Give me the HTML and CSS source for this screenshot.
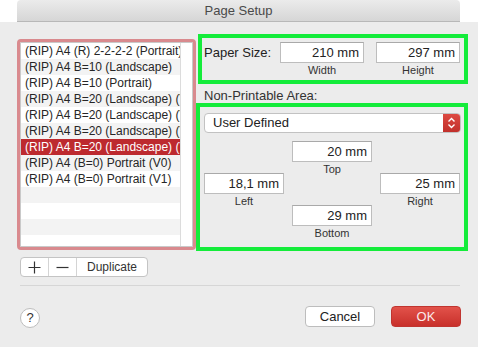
FILE: index.html
```html
<!DOCTYPE html>
<html lang="en">
<head>
    <meta charset="UTF-8">
    <title>Page Setup</title>
    <link rel="stylesheet" href="styles.css">
</head>
<body>

<div class="titlebar">Page Setup</div>

<div class="window">
    <div class="main">
        <div class="left">
            <div class="list">
                <div class="rows">
                    <div class="row">(RIP) A4 (R) 2-2-2-2 (Portrait)</div>
                    <div class="row">(RIP) A4 B=10 (Landscape)</div>
                    <div class="row">(RIP) A4 B=10 (Portrait)</div>
                    <div class="row">(RIP) A4 B=20 (Landscape) (V0)</div>
                    <div class="row">(RIP) A4 B=20 (Landscape) (V1)</div>
                    <div class="row">(RIP) A4 B=20 (Landscape) (V2)</div>
                    <div class="row selected">(RIP) A4 B=20 (Landscape) (V3)</div>
                    <div class="row">(RIP) A4 (B=0) Portrait (V0)</div>
                    <div class="row">(RIP) A4 (B=0) Portrait (V1)</div>
                    <div class="row"></div>
                    <div class="row"></div>
                    <div class="row"></div>
                    <div class="row"></div>
                </div>
                <div class="scroller"></div>
            </div>
            <div class="segmented">
                <span class="seg seg-icon">
                    <svg width="13" height="13" viewBox="0 0 13 13">
                        <path d="M6.5 0.5 V12.5 M0.5 6.5 H12.5" stroke="#333" stroke-width="1.2" fill="none"/>
                    </svg>
                </span>
                <span class="seg seg-icon">
                    <svg width="13" height="13" viewBox="0 0 13 13">
                        <path d="M0.5 6.5 H12.5" stroke="#333" stroke-width="1.2" fill="none"/>
                    </svg>
                </span>
                <span class="seg seg-text">Duplicate</span>
            </div>
        </div>

        <div class="right">
            <div class="box paper">
                <span class="paper-label">Paper Size:</span>
                <div class="field">
                    <input class="num" type="text" value="210 mm">
                    <span class="caption">Width</span>
                </div>
                <div class="field second">
                    <input class="num" type="text" value="297 mm">
                    <span class="caption">Height</span>
                </div>
            </div>

            <div class="section-label">Non-Printable Area:</div>

            <div class="box margins">
                <div class="popup">
                    <span>User Defined</span>
                    <span class="stepper">
                        <svg width="9" height="12" viewBox="0 0 9 12">
                            <path d="M1.5 4.5 L4.5 1.5 L7.5 4.5 M1.5 7.5 L4.5 10.5 L7.5 7.5" fill="none" stroke="#fff" stroke-width="1.4"/>
                        </svg>
                    </span>
                </div>
                <div class="margin-grid">
                    <div class="field side">
                        <input class="num" type="text" value="18,1 mm">
                        <span class="caption">Left</span>
                    </div>
                    <div class="field center">
                        <input class="num" type="text" value="20 mm">
                        <span class="caption">Top</span>
                        <input class="num bottom" type="text" value="29 mm">
                        <span class="caption">Bottom</span>
                    </div>
                    <div class="field side">
                        <input class="num" type="text" value="25 mm">
                        <span class="caption">Right</span>
                    </div>
                </div>
            </div>
        </div>
    </div>

    <div class="separator"></div>

    <div class="footer">
        <span class="help">?</span>
        <button class="btn cancel">Cancel</button>
        <button class="btn ok">OK</button>
    </div>
</div>

</body>
</html>
```

FILE: styles.css
```css
body {
    margin: 0;
    background-color: #fff;
    font-family: "Liberation Sans", Arial, sans-serif;
    color: #222;
    font-size: 13px;
}
.titlebar {
    margin: 0 18px 0 17px;
    height: 21px;
    line-height: 22px;
    text-align: center;
    color: #4a4a4a;
    font-size: 13px;
    background: linear-gradient(#ebebeb, #d6d6d6);
    border-bottom: 1px solid #b8b8b8;
    border-radius: 4px 4px 0 0;
}
.window {
    background-color: #ececec;
    height: 325px;
    overflow: hidden;
}
.main {
    display: flex;
    align-items: flex-start;
    height: 255px;
}
.left {
    margin-left: 17px;
    margin-top: 17px;
    width: 179px;
}
.list {
    display: flex;
    height: 203px;
    border: 3px solid #d98a8e;
    border-radius: 4px;
    background-color: #fff;
    box-shadow: inset 0 0 0 1px #c9c9c9;
    padding: 1px;
    overflow: hidden;
}
.rows {
    width: 159px;
    border-right: 1px solid #dcdcdc;
    overflow: hidden;
}
.row {
    height: 16px;
    line-height: 16px;
    padding-left: 4px;
    font-size: 12px;
    white-space: nowrap;
    overflow: hidden;
    color: #262626;
}
.row:nth-child(even) {
    background-color: #f3f3f3;
}
.row.selected {
    background-color: #bd2a2f;
    color: #fff;
}
.scroller {
    flex: 1;
}
.segmented {
    display: inline-flex;
    margin: 7px 0 0 3px;
    height: 18px;
    border: 1px solid #c4c4c4;
    border-radius: 4px;
    background-color: #fff;
}
.seg {
    display: flex;
    align-items: center;
    justify-content: center;
    border-left: 1px solid #d4d4d4;
    color: #333;
}
.seg:first-child {
    border-left: none;
}
.seg-icon {
    width: 27px;
}
.seg-text {
    width: 70px;
    font-size: 12px;
}
.right {
    margin-top: 12px;
    width: 272px;
}
.box {
    box-sizing: border-box;
    border: 4px solid #14ec3a;
}
.paper {
    display: flex;
    align-items: flex-start;
    margin-left: 2px;
    height: 50px;
    padding: 4px 3px 0 2px;
}
.paper-label {
    width: 76px;
    line-height: 21px;
    font-size: 13px;
    white-space: nowrap;
}
.field {
    display: flex;
    flex-direction: column;
    align-items: center;
}
.field.second {
    margin-left: 12px;
}
.num {
    box-sizing: border-box;
    width: 84px;
    height: 21px;
    margin: 0;
    padding: 0 4px;
    border: 1px solid #bdbdbd;
    border-top-color: #a9a9a9;
    background-color: #fff;
    font-family: "Liberation Sans", Arial, sans-serif;
    font-size: 13px;
    color: #222;
    text-align: right;
    outline: none;
}
.caption {
    font-size: 11px;
    line-height: 14px;
    color: #333;
}
.section-label {
    height: 15px;
    margin-top: 4px;
    padding-left: 8px;
    font-size: 13px;
    line-height: 15px;
    color: #333;
}
.margins {
    height: 148px;
    padding: 6px 3px 0 4px;
}
.popup {
    display: flex;
    justify-content: space-between;
    box-sizing: border-box;
    height: 20px;
    border: 1px solid #c2c2c2;
    border-radius: 4px;
    background-color: #fff;
    overflow: hidden;
}
.popup span:first-child {
    padding-left: 8px;
    line-height: 18px;
    font-size: 13px;
}
.stepper {
    display: flex;
    align-items: center;
    justify-content: center;
    width: 17px;
    background: linear-gradient(#dd4a42, #c1302b);
}
.margin-grid {
    display: flex;
    gap: 8px;
    margin-top: 8px;
}
.margin-grid .num {
    width: 80px;
}
.side {
    margin-top: 32px;
}
.num.bottom {
    margin-top: 29px;
}
.separator {
    height: 1px;
    margin: 8px 18px 0 20px;
    background-color: #d6d6d6;
}
.footer {
    display: flex;
    align-items: flex-start;
    margin-top: 20px;
    padding: 0 17px 0 20px;
}
.help {
    box-sizing: border-box;
    width: 20px;
    height: 20px;
    margin-top: 2px;
    margin-right: auto;
    border: 1px solid #bdbdbd;
    border-radius: 50%;
    background-color: #fff;
    text-align: center;
    line-height: 18px;
    font-size: 13px;
    color: #333;
}
.btn {
    box-sizing: border-box;
    width: 70px;
    height: 21px;
    padding: 0;
    border-radius: 4px;
    font-family: "Liberation Sans", Arial, sans-serif;
    font-size: 13px;
}
.cancel {
    border: 1px solid #bdbdbd;
    background-color: #fff;
    color: #222;
}
.ok {
    margin-left: 16px;
    border: 1px solid #c03530;
    background: linear-gradient(#e2524a, #c8302b);
    color: #fbeaea;
}
```
